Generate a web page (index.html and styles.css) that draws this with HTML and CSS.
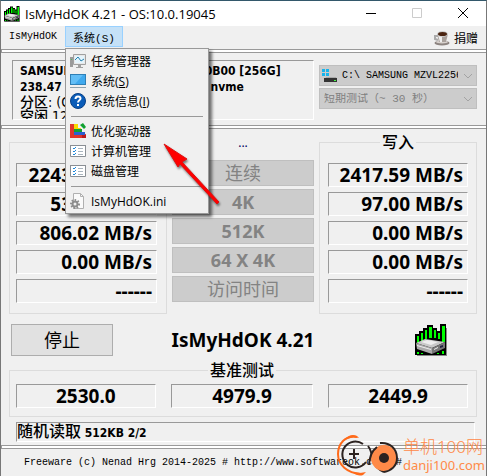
FILE: index.html
```
<!DOCTYPE html>
<html lang="zh-CN">
<head>
  <meta charset="UTF-8">
  <meta name="viewport" content="width=device-width, initial-scale=1">
  <title>IsMyHdOK 4.21</title>
  <link rel="stylesheet" href="styles.css">
</head>

<body>

  <svg class="defs" width="0" height="0">
    <symbol id="drive" viewBox="0 0 32 32">
      <path fill="#888" d="M31 4h1v28H2v-1h29z"/>
      <path fill="#000" d="M0 10h4V7h4V4h4V1h6v3h4v3h3V0h6v31H0z"/>
      <path fill="#0f0" d="M2 12h2v7H2zM6 9h2v8H6zM10 6h2v9h-2zM14 3h3v11h-3zM19 6h2v8h-2zM23 9h2v6h-2zM27 2h3v16h-3zM2 28h2v2H2zM6 29h2v1H6zM22 29h2v1h-2zM27 27h2v3h-2z"/>
      <path fill="#c9c9c9" d="M1 19l9-4 20 3-13 6z"/>
      <path fill="#eee" d="M6 18l6-2 11 2-7 3z"/>
      <path fill="#aaa" d="M1 19l16 5v6L2 25z"/>
      <path fill="#777" d="M17 24l13-6v6l-13 6z"/>
      <path fill="#eee" d="M2 21l14 4v1L2 22zM19 25l4-2v1l-4 2z"/>
      <path fill="#224" d="M25 22l3-1v2l-3 1z"/>
    </symbol>
    <symbol id="checklist" viewBox="0 0 16 14">
      <path fill="#fff" stroke="#8a8f94" d="M.5 1.5h15v11H.5z"/>
      <path fill="#8a8f94" d="M0 1h16v1H0z"/>
      <path fill="none" stroke="#1c86d8" d="M3 4l1 1 2-2M3 7l1 1 2-2M3 10l1 1 2-2"/>
      <path fill="none" stroke="#a9b4bd" d="M8 4.500h5M8 7.500h5M8 10.500h5"/>
    </symbol>
    <symbol id="chevron" viewBox="0 0 10 6">
      <path fill="none" stroke="#a3a3a3" d="M1 1l4 4 4-4"/>
    </symbol>
  </svg>

  <div class="window">
    <header class="titlebar">
      <svg class="app-icon"><use href="#drive"/></svg>
      <h1>IsMyHdOK 4.21 - OS:10.0.19045</h1>
      <div class="caption">
        <button aria-label="最小化"><svg width="10" height="10" viewBox="0 0 10 10"><path stroke="#000" d="M0 5.500h10"/></svg></button>
        <button aria-label="最大化" disabled><svg width="10" height="10" viewBox="0 0 10 10"><path fill="none" stroke="#ccc" d="M.5.500h9v9h-9z"/></svg></button>
        <button aria-label="关闭"><svg width="10" height="10" viewBox="0 0 10 10"><path stroke="#000" d="M0 0l10 10M10 0L0 10"/></svg></button>
      </div>
    </header>

    <nav class="menubar">
      <button class="menu-app">IsMyHdOK</button>
      <div class="menu-holder">
        <button class="menu-open" aria-expanded="true">系统(S)</button>

        <div class="dropdown">
          <button>
            <svg width="16" height="16" viewBox="0 0 16 16">
              <path fill="#9a9a9a" d="M0 4h3v10H0z"/><path fill="#50c050" d="M1 6h1v1H1z"/>
              <path fill="#e8e8e8" stroke="#a0a0a0" d="M3.500 1.500h12v10h-12z"/>
              <path fill="#e4f4fc" d="M5 3h9v7H5z"/>
              <path fill="none" stroke="#2380ae" d="M5 7l3-3 3 4 3-2"/>
              <path fill="#a0a0a0" d="M8 12h3v2h2v1H6v-1h2z"/>
            </svg>
            任务管理器
          </button>
          <button>
            <svg width="16" height="16" viewBox="0 0 16 16">
              <path fill="#2f7fb5" d="M0 1h16v11H0z"/><path fill="#3fa9ee" d="M1 2h14v9H1z"/><path fill="#62bef6" d="M1 2h12L5 11H1z"/>
              <path fill="#8ea2ae" d="M0 14h16v1H0z"/>
            </svg>
            系统(<u>S</u>)
          </button>
          <button>
            <svg width="16" height="16" viewBox="0 0 16 16">
              <circle cx="8" cy="8" r="7.500" fill="#0a5cb8" stroke="#073f86"/>
              <path fill="none" stroke="#fff" stroke-width="2" d="M5.500 6c0-3.500 5-3 5-.5C10.500 7.500 8 7 8 9.500"/><path fill="#fff" d="M7 11h2v2H7z"/>
            </svg>
            系统信息(<u>I</u>)
          </button>
          <hr>
          <button>
            <svg width="16" height="16" viewBox="0 0 16 16">
              <path fill="#e0352b" d="M0 1h4v10h12v4H0z"/><path fill="#f8d800" d="M4 1h4v5H4z"/>
              <path fill="#f8d800" d="M8 5h3v2H8z"/><path fill="#10a030" d="M4 6h8v3H4zM10 2l3-2 3 4-2 2z"/>
              <path fill="#2c5fd0" d="M4 9h11v3H4z"/><path fill="#b81c1c" d="M12 12h4v3h-4z"/>
            </svg>
            优化驱动器
          </button>
          <button><svg width="16" height="14"><use href="#checklist"/></svg>计算机管理</button>
          <button><svg width="16" height="14"><use href="#checklist"/></svg>磁盘管理</button>
          <hr>
          <button>
            <svg width="16" height="16" viewBox="0 0 16 16">
              <path fill="#fafafa" stroke="#b0b0b0" d="M3.500.500h7l3 3v12h-10z"/><path fill="none" stroke="#b0b0b0" d="M10.500.500v3h3"/>
              <circle cx="5" cy="11" r="4" fill="none" stroke="#8c8c8c" stroke-width="2" stroke-dasharray="1.500 1.500"/>
              <circle cx="5" cy="11" r="2.500" fill="#eee" stroke="#8c8c8c" stroke-width="2"/>
            </svg>
            IsMyHdOK.ini
          </button>
        </div>

        <svg class="arrow" width="64" height="68" viewBox="0 0 64 68">
          <path d="M2 2l23 15-5 3 37 40-2 2-37-40-2 3z"/>
        </svg>
      </div>
      <button class="donate">
        <svg width="16" height="16" viewBox="0 0 16 16">
          <ellipse cx="8" cy="13" rx="7.500" ry="2.500" fill="#8d8480"/><ellipse cx="8" cy="12" rx="6" ry="1.500" fill="#d8d2ce"/>
          <path fill="none" stroke="#aaa" stroke-width="2" d="M4 6H1v3l3 1"/>
          <path fill="#a9a19c" d="M3 4h11l-2 8H5z"/><path fill="#eee" d="M4 5h4v7H6z"/>
          <ellipse cx="8.500" cy="4" rx="5.500" ry="3" fill="#ccc"/><ellipse cx="8.500" cy="4" rx="4.500" ry="2" fill="#4a2410"/>
        </svg>
        捐赠
      </button>
    </nav>

    <div class="divider"></div>

    <section class="info">
      <div class="sunken drive-info">SAMSUNG MZVLB256HBHQ-000B00 [256G]<br>238.47 GB - Windows 10 - Bus: nvme<br><span class="cjk">分区: (C:)<br>空闲 120 GB</span></div>
      <div class="pickers">
        <div class="picker">
          <svg class="disk" width="16" height="16" viewBox="0 0 16 16">
            <path fill="#18b4ec" d="M0 1h3v3H0zM4 1h3v3H4zM0 5h3v3H0zM4 5h3v3H4z"/>
            <path fill="#aaa" d="M4 9h10l1 2H3z"/><path fill="#333" d="M2 10h13v4H2z"/><path fill="#4f4" d="M12 12h2v1h-2z"/>
          </svg>
          <select class="with-icon" aria-label="驱动器" disabled><option>C:\ SAMSUNG MZVL2256HCHQ-00B00</option></select>
          <svg class="chevron"><use href="#chevron"/></svg>
        </div>
        <div class="picker">
          <select class="faded" aria-label="测试时长" disabled><option>短期测试（~ 30 秒）</option></select>
          <svg class="chevron"><use href="#chevron"/></svg>
        </div>
      </div>
    </section>

    <div class="divider"></div>

    <main>
      <section class="results">
        <fieldset class="group read">
          <legend>读取</legend>
          <output class="sunken value">2243.37 MB/s</output>
          <output class="sunken value">53.69 MB/s</output>
          <output class="sunken value">806.02 MB/s</output>
          <output class="sunken value">0.00 MB/s</output>
          <output class="sunken value">------</output>
        </fieldset>

        <div class="tests">
          <span class="dots">...</span>
          <button disabled>连续</button>
          <button disabled>4K</button>
          <button disabled>512K</button>
          <button disabled>64 X 4K</button>
          <button disabled>访问时间</button>
        </div>

        <fieldset class="group write">
          <legend>写入</legend>
          <output class="sunken value">2417.59 MB/s</output>
          <output class="sunken value">97.00 MB/s</output>
          <output class="sunken value">0.00 MB/s</output>
          <output class="sunken value">0.00 MB/s</output>
          <output class="sunken value">------</output>
        </fieldset>
      </section>

      <section class="actions">
        <button class="stop">停止</button>
        <h2>IsMyHdOK 4.21</h2>
        <svg class="logo"><use href="#drive"/></svg>
      </section>

      <fieldset class="group score">
        <legend>基准测试</legend>
        <output class="sunken value">2530.0</output>
        <output class="sunken value">4979.9</output>
        <output class="sunken value">2449.9</output>
      </fieldset>

      <p class="sunken status"><span class="cjk">随机读取</span> 512KB 2/2</p>
    </main>

    <div class="divider"></div>

    <footer>Freeware (c) Nenad Hrg 2014-2025 # http://www.softwareok.com/ #</footer>

    <div class="watermark">
      <svg width="64" height="42" viewBox="0 0 64 42">
        <path fill="none" stroke="#ff6a1a" stroke-width="2" d="M21 3C9 1 2 10 2 20c0 11 9 19 23 20"/>
        <path fill="#ff6a1a" d="M8 6c4-5 9-6 13-4l2 2-6-1zM16 38c5 4 8 4 11 3l3-3-6 1z"/>
        <path fill="none" stroke="#2b2220" stroke-width="2" d="M27 10A13 13 0 1 0 30 28M32 12c4 5 4 11 5 15s6 9 11 11"/>
        <path stroke="#2b2220" stroke-width="2" d="M13 20h10M18 15v10"/>
        <circle cx="48" cy="24" r="13" fill="#ff8a48"/>
        <path fill="none" stroke="#2b2220" stroke-width="2" d="M33 31c1-10 3-14 8-18M44 9c10-1 17 6 17 15 0 8-6 13-13 14"/>
        <circle cx="48" cy="24" r="5" fill="#2b2220"/>
      </svg>
      <div class="site">
        <span class="site-name">单机100网</span>
        <span class="site-url">danji100.com</span>
      </div>
    </div>
  </div>

</body>
</html>
```
FILE: styles.css
```
* {
  margin: 0;
  padding: 0;
  box-sizing: border-box;
}

body {
  background: #f0f0f0;
  color: #000;
  font-family: 'Noto Sans', 'Noto Sans CJK SC', sans-serif;
  font-size: 12px;
}

button,
select {
  font: inherit;
  color: inherit;
  background: none;
  border: none;
}

svg {
  flex: none;
}

.defs {
  position: absolute;
}

.window {
  position: relative;
  min-height: 100vh;
  display: flex;
  flex-direction: column;
  border: 1px solid #777;
  border-top-color: #33586b;
}

/* title bar */
.titlebar {
  display: flex;
  align-items: center;
  height: 25px;
  padding-left: 3px;
  background: #fff;
}

.app-icon {
  width: 16px;
  height: 16px;
}

.titlebar h1 {
  flex: 1;
  margin-left: 5px;
  font-family: 'Open Sans', sans-serif;
  font-size: 13px;
  font-weight: 400;
}

.caption {
  display: flex;
}

.caption button {
  width: 46px;
  height: 24px;
}

/* menu */
.menubar {
  display: flex;
  height: 23px;
  font-family: 'Liberation Mono', 'Noto Sans CJK SC', monospace;
}

.menu-app {
  height: 21px;
  padding: 0 8px;
  font-size: 10px;
}

.menu-holder {
  position: relative;
}

.menu-open {
  width: 58px;
  height: 21px;
  background: #c5e1f7;
  border: 1px solid #99d1ff;
  font-size: 11px;
}

.donate {
  display: flex;
  align-items: center;
  gap: 4px;
  margin-left: auto;
  margin-right: 8px;
}

.dropdown {
  position: absolute;
  z-index: 2;
  top: 22px;
  left: 0;
  width: 144px;
  padding: 2px;
  background: #f0f0f0;
  border: 1px solid #999;
  box-shadow: 3px 3px 3px rgba(0, 0, 0, 0.55);
  font-family: 'Open Sans', 'Noto Sans CJK SC', sans-serif;
}

.dropdown button {
  display: flex;
  align-items: center;
  width: 100%;
  height: 20px;
  padding-left: 2px;
  white-space: nowrap;
}

.dropdown svg {
  margin-right: 5px;
}

.dropdown hr {
  margin: 5px 3px 4px;
  border: none;
  border-top: 1px solid #999;
}

.arrow {
  position: absolute;
  z-index: 3;
  top: 116px;
  left: 97px;
  fill: #f00;
  stroke: #d11;
  filter: drop-shadow(1px 2px 1px rgba(0, 0, 0, 0.5));
}

.divider {
  height: 4px;
  flex: none;
  background: #fff;
  border: 1px solid #999;
  border-right: none;
}

.sunken {
  border: 1px solid #fff;
  border-top-color: #999;
  border-left-color: #999;
}

/* drive details */
.info {
  display: flex;
  gap: 5px;
  height: 72px;
  padding: 7px 9px 5px 11px;
}

.drive-info {
  flex: 1;
  padding: 2px 7px;
  overflow: hidden;
  white-space: nowrap;
  font: bold 12px/16px 'DejaVu Sans Condensed', 'Noto Sans CJK SC', sans-serif;
}

.drive-info .cjk {
  display: block;
  font-size: 14px;
  font-weight: 500;
  line-height: 14px;
}

.pickers {
  display: flex;
  flex-direction: column;
  gap: 2px;
  width: 158px;
  padding-top: 5px;
}

.picker {
  position: relative;
}

.picker select {
  display: block;
  width: 100%;
  height: 21px;
  padding: 0 18px 0 4px;
  appearance: none;
  background: #ccc;
  border: 1px solid #bfbfbf;
  color: #000;
  opacity: 1;
  font-family: 'Liberation Mono', 'Noto Sans CJK SC', monospace;
  font-size: 11px;
}

.picker .with-icon {
  padding-left: 22px;
  font-size: 10px;
}

.picker .faded {
  color: #808080;
}

.disk {
  position: absolute;
  top: 3px;
  left: 3px;
}

.chevron {
  position: absolute;
  top: 8px;
  right: 4px;
  width: 10px;
  height: 6px;
}

/* results */
main {
  padding: 5px 9px 3px 8px;
}

.results {
  display: grid;
  grid-template-columns: 158fr 142fr 158fr;
  gap: 5px;
}

.group {
  min-width: 0;
  border: 1px solid #dcdcdc;
}

.group legend {
  margin: 0 auto;
  padding: 0 2px;
  font-size: 16px;
  font-weight: 500;
  line-height: 16px;
}

.read,
.write {
  height: 180px;
  padding: 13px 8px 0;
}

.read {
  padding: 13px 9px 0 6px;
}

.value {
  display: block;
  height: 24px;
  margin-bottom: 5px;
  padding-right: 4px;
  text-align: right;
  white-space: nowrap;
  font: bold 19px/22px 'Noto Sans', sans-serif;
}

.tests {
  display: flex;
  flex-direction: column;
  gap: 3px;
}

.dots {
  height: 23px;
  text-align: center;
  color: #000060;
}

.tests button {
  height: 26px;
  background: #ccc;
  border: 1px solid #bfbfbf;
  color: #838383;
  font-size: 18px;
  font-weight: bold;
  line-height: 20px;
}

.tests button:nth-of-type(1),
.tests button:nth-of-type(5) {
  font-weight: 400;
}

.actions {
  display: grid;
  grid-template-columns: 158fr 142fr 158fr;
  gap: 5px;
  align-items: center;
  margin: 10px 0 6px;
}

.stop {
  width: 102px;
  height: 32px;
  margin-left: 2px;
  background: #e1e1e1;
  border: 1px solid #adadad;
  font-size: 18px;
  line-height: 24px;
}

.actions h2 {
  justify-self: end;
  font-size: 19px;
  line-height: 24px;
  white-space: nowrap;
}

.logo {
  width: 32px;
  height: 32px;
  justify-self: end;
  margin-right: 30px;
}

.score {
  display: grid;
  grid-template-columns: 140fr 143fr 140fr;
  gap: 15px;
  height: 55px;
  padding: 6px 8px 0 6px;
}

.score .value {
  padding: 0;
  text-align: center;
}

.status {
  height: 20px;
  margin: 5px 2px 0 7px;
  font: bold 12px/18px 'DejaVu Sans Condensed', 'Noto Sans CJK SC', sans-serif;
}

.status .cjk {
  font-size: 16px;
  font-weight: 500;
}

footer {
  padding: 6px 23px 5px;
  font: 10px/16px 'Liberation Mono', monospace;
  white-space: nowrap;
}

/* site mark in the corner */
.watermark {
  position: absolute;
  right: 1px;
  bottom: 0;
  display: flex;
  gap: 3px;
  color: #ff8a48;
}

.site {
  display: flex;
  flex-direction: column;
  padding-top: 3px;
}

.site-name {
  font-size: 17px;
  font-weight: 300;
  line-height: 20px;
}

.site-url {
  font-size: 13px;
  line-height: 16px;
}
```
